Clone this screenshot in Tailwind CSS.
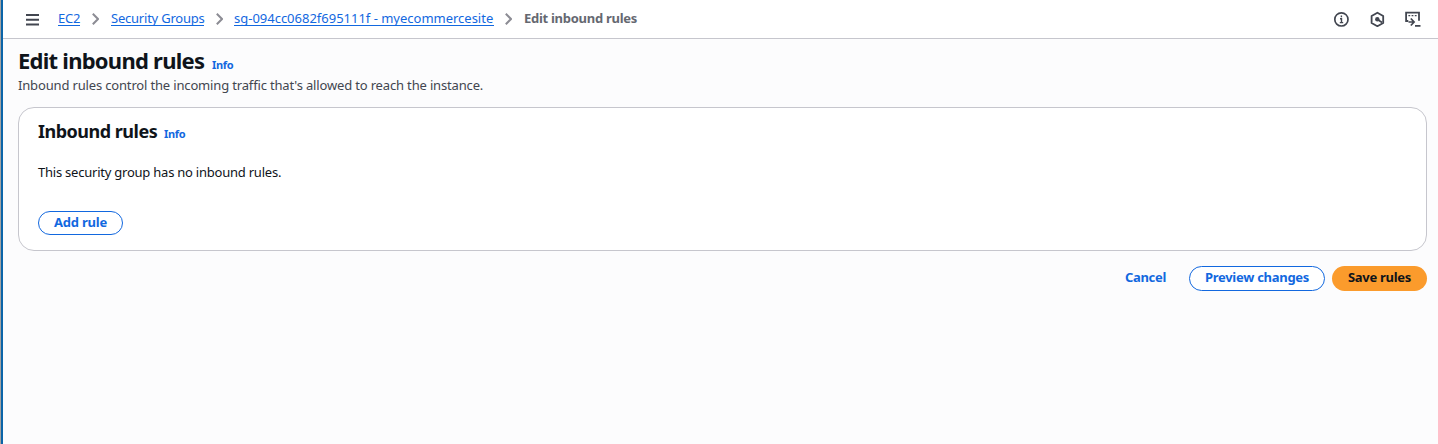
<!DOCTYPE html>
<html lang="en">
<head>
<meta charset="utf-8">
<title>Edit inbound rules</title>
<script src="https://cdn.jsdelivr.net/npm/@tailwindcss/browser@4"></script>
</head>
<body class="h-[444px] overflow-hidden bg-[#fcfcfd] font-['Noto_Sans',sans-serif] text-[13px] leading-5 text-[#0f141a] whitespace-nowrap">
<div class="flex h-full">
  <div class="w-px shrink-0 bg-[#a3a3a3]"></div>
  <div class="w-[2px] shrink-0 bg-[#0b64a8]"></div>
  <div class="min-w-0 flex-1">
    <header class="flex h-[39px] items-center border-b border-[#c6c6cd] bg-white pl-[23px] pr-[17px]">
      <button class="mr-[19px]" aria-label="Open navigation">
        <svg class="block h-[13px] w-[13px]" viewBox="0 0 13 13" stroke="#424650" stroke-width="2"><path d="M0 2h13M0 6.7h13M0 11.5h13"/></svg>
      </button>
      <nav class="flex h-[38px] items-start pt-[9px]">
        <a class="h-[17px] w-[22px] border-b border-[#1268df] leading-[19px] tracking-[-0.28px] text-[#1268df]">EC2</a>
        <svg class="mx-3 mt-1 h-3 w-[7px]" viewBox="0 0 7 12" fill="none" stroke="#8c8c94" stroke-width="2"><path d="M.8 .8 6 6 .8 11.2"/></svg>
        <a class="h-[17px] w-[93px] border-b border-[#1268df] leading-[19px] tracking-[-0.22px] text-[#1268df]">Security Groups</a>
        <svg class="ml-3 mr-[11px] mt-1 h-3 w-[7px]" viewBox="0 0 7 12" fill="none" stroke="#8c8c94" stroke-width="2"><path d="M.8 .8 6 6 .8 11.2"/></svg>
        <a class="h-[17px] w-[260px] border-b border-[#1268df] leading-[19px] tracking-[-0.01px] text-[#1268df]">sg-094cc0682f695111f - myecommercesite</a>
        <svg class="mx-[11px] mt-1 h-3 w-[7px]" viewBox="0 0 7 12" fill="none" stroke="#8c8c94" stroke-width="2"><path d="M.8 .8 6 6 .8 11.2"/></svg>
        <span class="pl-px font-bold leading-[19px] tracking-[-0.28px] text-[#656871]">Edit inbound rules</span>
      </nav>
      <div class="ml-auto flex items-center gap-5 text-[#424650]">
        <svg class="h-4 w-4" viewBox="0 0 16 16" fill="none" stroke="currentColor"><circle cx="8.4" cy="8.4" r="6.6" stroke-width="1.7"/><path d="M8.4 4.6v1.7M7 7.8h1.5v3.4M6.8 11.6h3.4" stroke-width="1.4"/></svg>
        <svg class="h-4 w-4" viewBox="0 0 16 16" fill="none" stroke="currentColor" stroke-width="1.8"><path d="M8.4 1.7 14.2 5v7l-5.8 3.2L2.6 12V5z" stroke-linejoin="round"/><circle cx="8.3" cy="8.3" r="2.2" fill="currentColor" stroke="none"/><path d="m8.5 8.5 4.6 2.9"/></svg>
        <svg class="h-4 w-4 overflow-visible" viewBox="0 0 16 16" fill="none" stroke="currentColor" stroke-width="1.8"><path d="M3.3 10H1.1V1.7H14V9.8"/><path d="M3.4 4.7h1.8M6.6 4.7h1.8M9.8 4.7h1.8" stroke-width="1.3"/><path d="M3.5 11H8.6M5.8 7.5l3.3 3.5-3.3 3.5M10 14.8h5.5" stroke-width="1.7"/></svg>
      </div>
    </header>
    <main class="pl-[15px] pr-[11px] pt-[6px]">
      <div class="flex h-[30px] items-baseline">
        <h1 class="w-[194px] text-[22px] font-bold leading-[30px] tracking-[-0.75px]">Edit inbound rules</h1>
        <a class="text-[11px] font-bold tracking-[-0.3px] text-[#1268df]">Info</a>
      </div>
      <p class="tracking-[-0.16px] text-[#424650]">Inbound rules control the incoming traffic that's allowed to reach the instance.</p>
      <section class="mt-3 h-[144px] rounded-2xl border border-[#c6c6cd] bg-white px-[19px] pt-[11px]">
        <div class="flex h-6 items-baseline">
          <h2 class="w-[126px] text-[18px] font-bold leading-6 tracking-[-0.5px]">Inbound rules</h2>
          <a class="text-[11px] font-bold tracking-[-0.3px] text-[#1268df]">Info</a>
        </div>
        <p class="mt-[19px] tracking-[-0.23px]">This security group has no inbound rules.</p>
        <button class="mt-[29px] flex h-6 w-[85px] items-center justify-center rounded-full border border-[#1268df] bg-white pb-0.5 font-bold tracking-[-0.2px] text-[#1268df]">Add rule</button>
      </section>
      <div class="mt-[15px] flex justify-end font-bold tracking-[-0.28px]">
        <button class="mr-[23px] flex h-[25px] w-[41px] items-center justify-center pb-[3px] text-[#1268df]">Cancel</button>
        <button class="mr-[7px] flex h-[25px] w-[136px] items-center justify-center rounded-full border border-[#1268df] bg-white pb-[3px] text-[#1268df]">Preview changes</button>
        <button class="flex h-[25px] w-[95px] items-center justify-center rounded-full bg-[#fb9b2c] pb-[3px]">Save rules</button>
      </div>
    </main>
  </div>
</div>
</body>
</html>
